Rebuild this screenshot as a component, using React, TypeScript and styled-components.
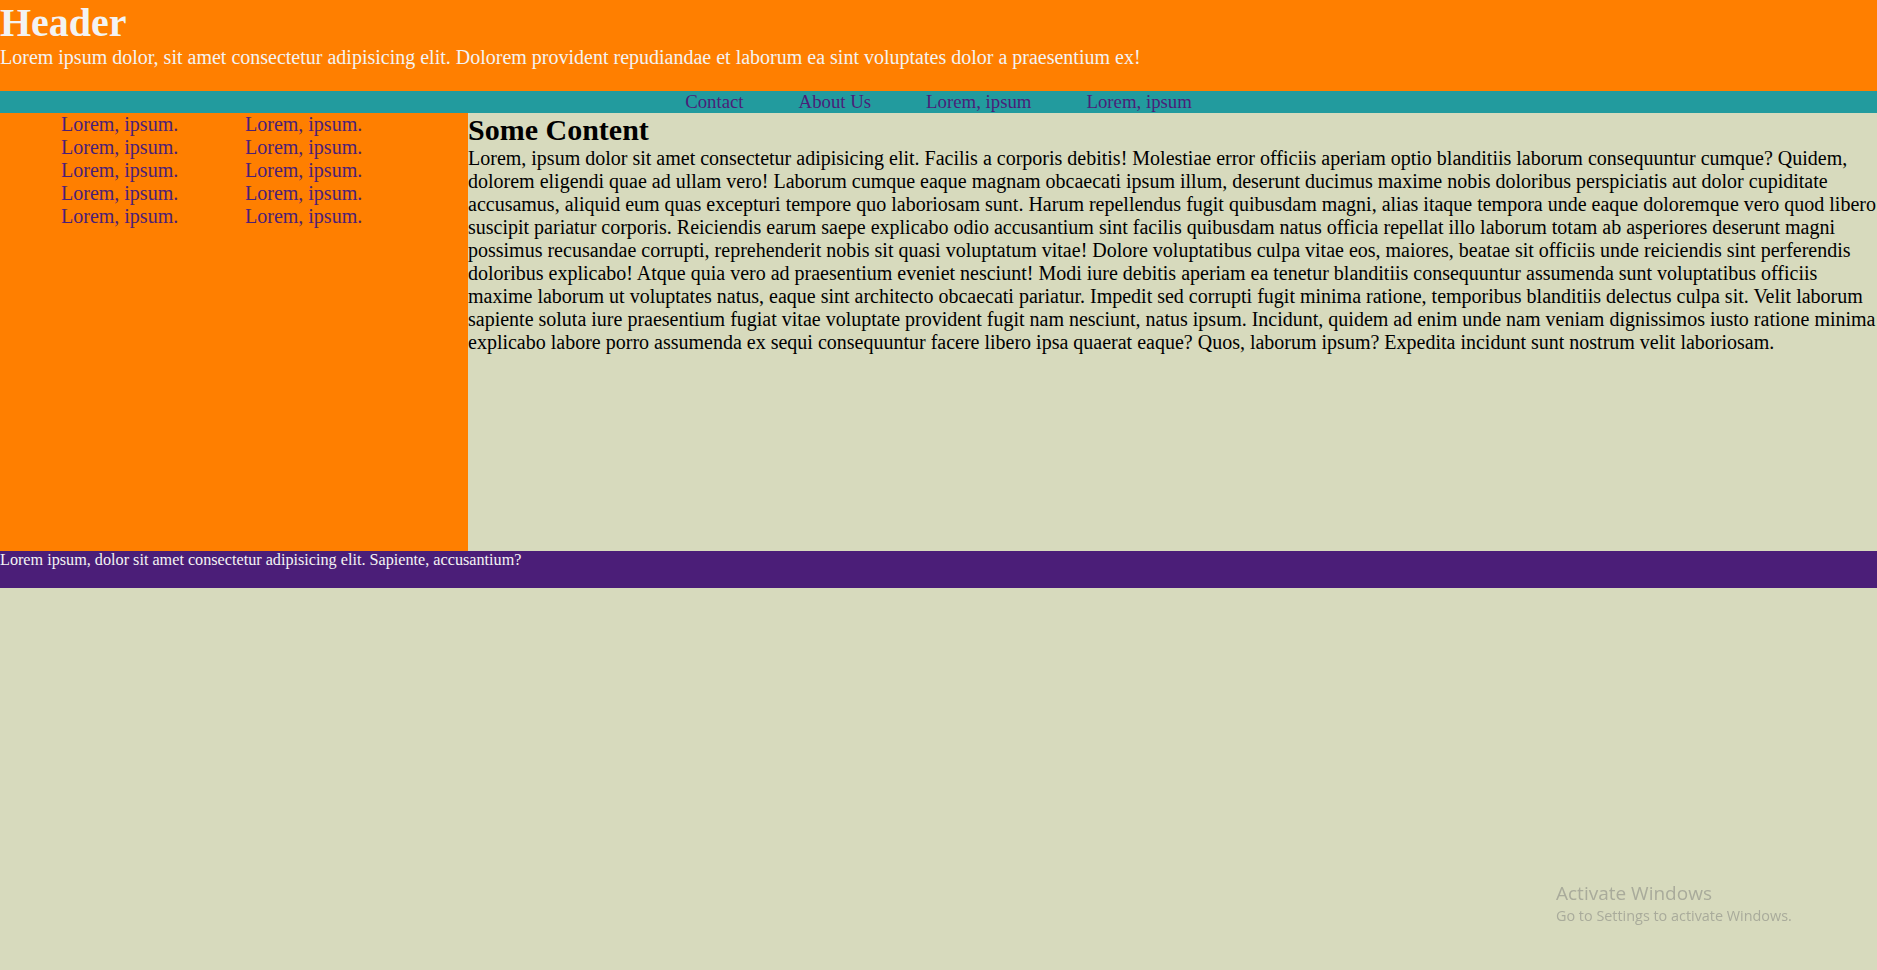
import React from "react";
import styled, { createGlobalStyle } from "styled-components";

const GlobalStyle = createGlobalStyle`
  html, body {
    margin: 0;
    padding: 0;
  }
  body {
    background: #d7dabd;
    font-family: "Liberation Serif", "Times New Roman", serif;
    font-size: 20px;
    color: #000;
  }
`;

const Page = styled.div`
  display: flex;
  flex-direction: column;
`;

const Header = styled.header`
  background: #ff7f00;
  color: #f3f3f3;
  height: 91px;
  box-sizing: border-box;
`;

const Title = styled.h1`
  margin: 0;
  font-size: 40px;
  font-weight: bold;
  line-height: 46px;
`;

const Subtitle = styled.p`
  margin: 0;
  font-size: 20px;
  line-height: 22px;
`;

const Nav = styled.nav`
  background: #229b9e;
  height: 22px;
  display: flex;
  justify-content: center;
  gap: 55px;
  line-height: 21px;
`;

const NavLink = styled.a`
  color: #4b1e78;
  text-decoration: none;
  font-size: 18.8px;
`;

const Main = styled.main`
  display: grid;
  grid-template-columns: 468px 1fr;
  height: 438px;
`;

const Sidebar = styled.aside`
  background: #ff7f00;
`;

const SideList = styled.ul`
  list-style: none;
  margin: 0;
  padding: 0 0 0 61px;
  display: grid;
  grid-template-columns: 184px 184px;
`;

const SideItem = styled.li`
  color: #4b1e78;
  font-size: 20px;
  line-height: 23px;
`;

const Content = styled.section`
  background: #d7dabd;
`;

const ContentTitle = styled.h2`
  margin: 0;
  font-size: 30px;
  font-weight: bold;
  line-height: 34px;
`;

const ContentText = styled.p`
  margin: 0;
  font-size: 20px;
  line-height: 23px;
`;

const Footer = styled.footer`
  background: #4b1e78;
  color: #f3f3f3;
  height: 37px;
  font-size: 16.2px;
  line-height: 18px;
`;

const Watermark = styled.div`
  position: fixed;
  left: 1556px;
  top: 880px;
  font-family: "Open Sans", "Noto Sans", sans-serif;
  color: #a9ab9b;
  pointer-events: none;
`;

const WatermarkTitle = styled.div`
  font-size: 19px;
  line-height: 26px;
`;

const WatermarkText = styled.div`
  font-size: 14.4px;
  line-height: 19px;
`;

const navItems = ["Contact", "About Us", "Lorem, ipsum", "Lorem, ipsum"];
const sideItems = Array.from({ length: 10 }, () => "Lorem, ipsum.");

export default function App() {
  return (
    <>
      <GlobalStyle />
      <Page>
        <Header>
          <Title>Header</Title>
          <Subtitle>
            Lorem ipsum dolor, sit amet consectetur adipisicing elit. Dolorem provident repudiandae et laborum ea sint
            voluptates dolor a praesentium ex!
          </Subtitle>
        </Header>
        <Nav>
          {navItems.map((n, i) => (
            <NavLink key={i} href="#">
              {n}
            </NavLink>
          ))}
        </Nav>
        <Main>
          <Sidebar>
            <SideList>
              {sideItems.map((s, i) => (
                <SideItem key={i}>{s}</SideItem>
              ))}
            </SideList>
          </Sidebar>
          <Content>
            <ContentTitle>Some Content</ContentTitle>
            <ContentText>
              Lorem, ipsum dolor sit amet consectetur adipisicing elit. Facilis a corporis debitis! Molestiae error
              officiis aperiam optio blanditiis laborum consequuntur cumque? Quidem, dolorem eligendi quae ad ullam vero!
              Laborum cumque eaque magnam obcaecati ipsum illum, deserunt ducimus maxime nobis doloribus perspiciatis aut
              dolor cupiditate accusamus, aliquid eum quas excepturi tempore quo laboriosam sunt. Harum repellendus fugit
              quibusdam magni, alias itaque tempora unde eaque doloremque vero quod libero suscipit pariatur corporis.
              Reiciendis earum saepe explicabo odio accusantium sint facilis quibusdam natus officia repellat illo
              laborum totam ab asperiores deserunt magni possimus recusandae corrupti, reprehenderit nobis sit quasi
              voluptatum vitae! Dolore voluptatibus culpa vitae eos, maiores, beatae sit officiis unde reiciendis sint
              perferendis doloribus explicabo! Atque quia vero ad praesentium eveniet nesciunt! Modi iure debitis aperiam
              ea tenetur blanditiis consequuntur assumenda sunt voluptatibus officiis maxime laborum ut voluptates natus,
              eaque sint architecto obcaecati pariatur. Impedit sed corrupti fugit minima ratione, temporibus blanditiis
              delectus culpa sit. Velit laborum sapiente soluta iure praesentium fugiat vitae voluptate provident fugit
              nam nesciunt, natus ipsum. Incidunt, quidem ad enim unde nam veniam dignissimos iusto ratione minima
              explicabo labore porro assumenda ex sequi consequuntur facere libero ipsa quaerat eaque? Quos, laborum
              ipsum? Expedita incidunt sunt nostrum velit laboriosam.
            </ContentText>
          </Content>
        </Main>
        <Footer>Lorem ipsum, dolor sit amet consectetur adipisicing elit. Sapiente, accusantium?</Footer>
      </Page>
      <Watermark>
        <WatermarkTitle>Activate Windows</WatermarkTitle>
        <WatermarkText>Go to Settings to activate Windows.</WatermarkText>
      </Watermark>
    </>
  );
}
